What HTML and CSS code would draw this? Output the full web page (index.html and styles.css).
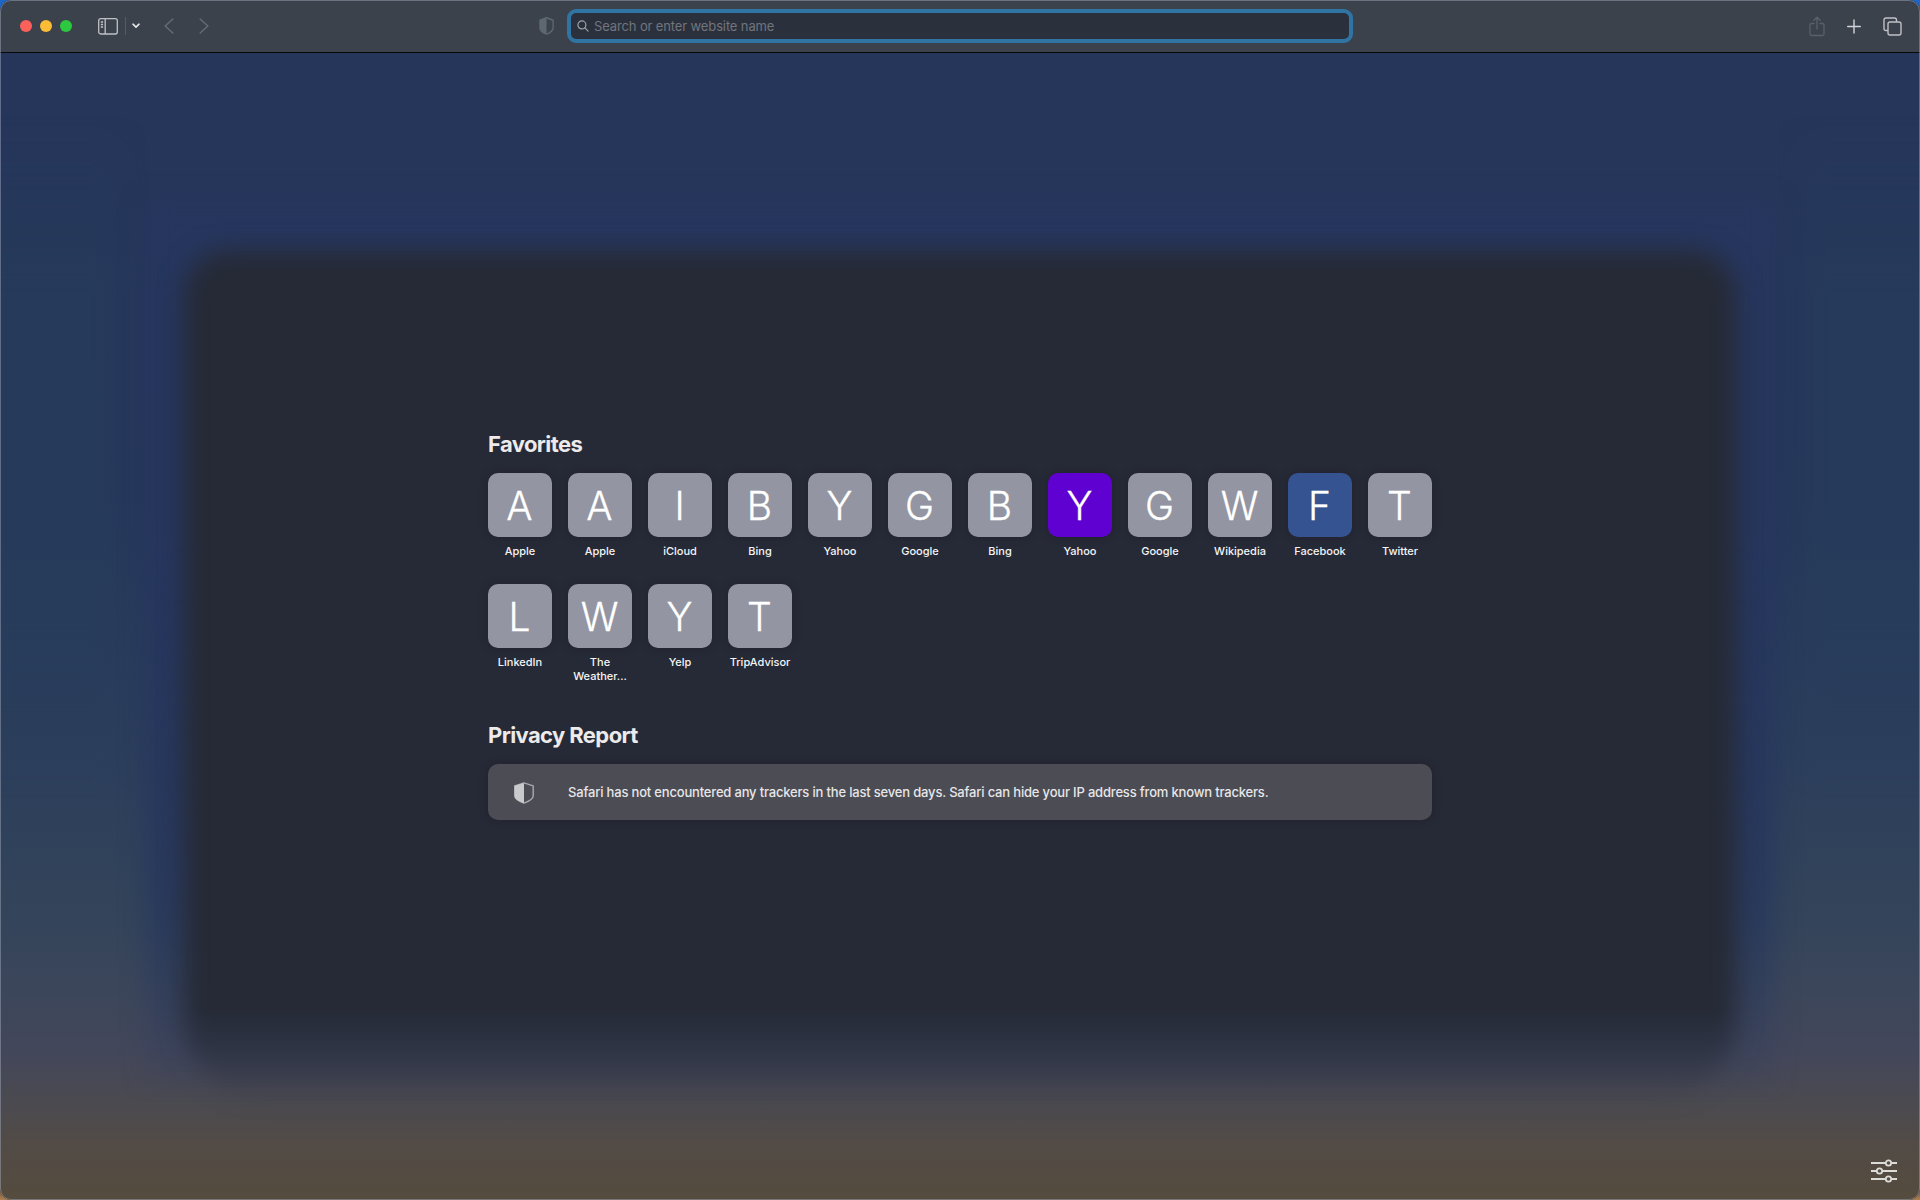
FILE: index.html
```html
<!DOCTYPE html>
<html lang="en">
<head>
<meta charset="utf-8">
<title>Start Page</title>
<link rel="stylesheet" href="styles.css">
</head>
<body>
<div class="window">
  <header class="toolbar">
    <div class="lights"><i class="light red"></i><i class="light yellow"></i><i class="light green"></i></div>
    <svg class="sidebar-icon" width="20" height="17" viewBox="0 0 20 17" fill="none" stroke="#bfc1c5" stroke-width="1.3"><rect x=".7" y=".7" width="18.6" height="15.3" rx="2"/><path d="M7.2 1v15M2.8 4h2.3M2.8 6.5h2.3M2.8 9h2.3"/></svg>
    <i class="divider"></i>
    <svg class="chevron" width="8" height="6" viewBox="0 0 8 6" fill="none" stroke="#e6e7e9" stroke-width="1.6" stroke-linecap="round" stroke-linejoin="round"><path d="M1 1.2l3 2.9 3-2.9"/></svg>
    <svg class="back" width="10" height="16" viewBox="0 0 10 16" fill="none" stroke="#656a75" stroke-width="1.5" stroke-linecap="round" stroke-linejoin="round"><path d="M8.8 1L1.2 8l7.6 7"/></svg>
    <svg class="forward" width="10" height="16" viewBox="0 0 10 16" fill="none" stroke="#656a75" stroke-width="1.5" stroke-linecap="round" stroke-linejoin="round"><path d="M1.2 1L8.8 8l-7.6 7"/></svg>
    <svg class="bar-shield" width="15" height="18" viewBox="0 0 20 22" preserveAspectRatio="none"><path d="M10 1L1.2 4v9c0 4 4.500 6.300 8.800 8 4.300-1.700 8.800-4 8.800-8V4z" fill="none" stroke="#5d6870" stroke-width="1.8" stroke-linejoin="round"/><path d="M10 1L1.2 4v9c0 4 4.500 6.300 8.800 8z" fill="#5d6870"/></svg>
    <div class="address">
      <svg width="12" height="12" viewBox="0 0 12 12" fill="none" stroke="#a1a3a8" stroke-width="1.2" stroke-linecap="round"><circle cx="4.900" cy="4.900" r="4"/><path d="M7.900 7.900l3.200 3.200"/></svg>
      <span>Search or enter website name</span>
    </div>
    <div class="actions">
      <svg width="16" height="21" viewBox="0 0 16 21" fill="none" stroke="#5c6066" stroke-width="1.3" stroke-linecap="round" stroke-linejoin="round"><path d="M5 7.500H2.500Q1 7.500 1 9v9q0 1.500 1.500 1.500h11Q15 19.500 15 18V9q0-1.500-1.500-1.500H11M8 13V1.300M4.800 4.300L8 1.200l3.200 3.100"/></svg>
      <svg width="14" height="15" viewBox="0 0 14 15" fill="none" stroke="#d2d4d7" stroke-width="1.4" stroke-linecap="round"><path d="M7 1v13M.7 7.500h12.600"/></svg>
      <svg width="19" height="19" viewBox="0 0 19 19" fill="none" stroke="#bfc1c5" stroke-width="1.4"><path d="M5 13.500H3Q1 13.500 1 11.500V3Q1 1 3 1h8.500q2 0 2 2v2"/><rect x="5" y="5" width="13" height="13" rx="2"/></svg>
    </div>
  </header>
  <main class="page">
    <div class="backdrop"></div>
    <div class="backdrop-glow"><div class="glow"></div></div>
    <div class="backdrop-shade"><div class="shade"></div></div>
    <div class="content">
      <h2 class="title favorites-title">Favorites</h2>
      <div class="grid">
        <div class="site"><b class="tile">A</b><span class="name">Apple</span></div>
        <div class="site"><b class="tile">A</b><span class="name">Apple</span></div>
        <div class="site"><b class="tile">I</b><span class="name">iCloud</span></div>
        <div class="site"><b class="tile">B</b><span class="name">Bing</span></div>
        <div class="site"><b class="tile">Y</b><span class="name">Yahoo</span></div>
        <div class="site"><b class="tile">G</b><span class="name">Google</span></div>
        <div class="site"><b class="tile">B</b><span class="name">Bing</span></div>
        <div class="site"><b class="tile purple">Y</b><span class="name">Yahoo</span></div>
        <div class="site"><b class="tile">G</b><span class="name">Google</span></div>
        <div class="site"><b class="tile">W</b><span class="name">Wikipedia</span></div>
        <div class="site"><b class="tile blue">F</b><span class="name">Facebook</span></div>
        <div class="site"><b class="tile">T</b><span class="name">Twitter</span></div>
        <div class="site"><b class="tile">L</b><span class="name">LinkedIn</span></div>
        <div class="site"><b class="tile">W</b><span class="name">The<br>Weather...</span></div>
        <div class="site"><b class="tile">Y</b><span class="name">Yelp</span></div>
        <div class="site"><b class="tile">T</b><span class="name">TripAdvisor</span></div>
      </div>
      <h2 class="title privacy-title">Privacy Report</h2>
      <div class="report">
        <svg width="20" height="22" viewBox="0 0 20 22"><path d="M10 .9L.8 3.800v10c0 3.600 4.500 5.600 9.200 7.400 4.700-1.800 9.200-3.800 9.200-7.400v-10z" fill="none" stroke="#a9aaae" stroke-width="1.4" stroke-linejoin="round"/><path d="M10 .9L.5 3.800v10c0 3.600 4.800 5.600 9.500 7.400z" fill="#c9cacc"/></svg>
        <span>Safari has not encountered any trackers in the last seven days. Safari can hide your IP address from known trackers.</span>
      </div>
    </div>
    <svg class="settings" width="26" height="24" viewBox="0 0 26 24" fill="none" stroke="#dcdbd8" stroke-width="1.8"><path d="M0 4h14.500M20.500 4H26M0 12h5.500M11.500 12H26M0 20h14.500M20.500 20H26"/><circle cx="17.500" cy="4" r="2.700"/><circle cx="8.500" cy="12" r="2.700"/><circle cx="17.500" cy="20" r="2.700"/></svg>
  </main>
</div>
</body>
</html>
```

FILE: styles.css
```css
* { box-sizing: border-box; }
body { margin: 0; width: 1920px; height: 1200px; overflow: hidden; background: linear-gradient(#1d66c8, #171c2a 40%, #171c2a 98%, #b08050); font-family: Inter, "Liberation Sans", sans-serif; }
svg { display: block; flex: none; }
.window { position: relative; display: flex; flex-direction: column; width: 1920px; height: 1200px; border-radius: 11px; overflow: hidden; }
.window::after { content: ""; position: absolute; inset: 0; border: 1px solid rgba(160, 170, 185, .48); border-radius: 11px; }
.toolbar { display: flex; align-items: center; flex: none; height: 53px; padding: 0 18px 0 20px; background: #3c424c; border-bottom: 1px solid #06080c; }
.lights { display: flex; gap: 8px; }
.light { width: 12px; height: 12px; border-radius: 50%; }
.red { background: #fc605b; }
.yellow { background: #fdbc35; }
.green { background: #2cc840; }
.sidebar-icon { margin-left: 26px; }
.divider { width: 1px; height: 18px; margin-left: 7px; background: #555a63; }
.chevron { margin-left: 6px; }
.back { margin-left: 24px; }
.forward { margin-left: 25px; }
.bar-shield { margin-left: 330px; }
.address { display: flex; align-items: center; gap: 5px; width: 786px; height: 34px; margin-left: 13px; padding-left: 6px; border: 4px solid #2f74a3; border-radius: 9px; background: #2b303d; color: #71757c; font-size: 13px; letter-spacing: -.13px; }
.actions { display: flex; align-items: center; gap: 22px; margin-left: auto; }
.page { position: relative; flex: 1; background: linear-gradient(#26365b 0, #26375b 450px, #2d3f5b 730px, #34445a 870px, #3b465a 930px, #43475a 1000px, #4b4a50 1050px, #524b46 1090px, #554b3e 1147px); }
.backdrop, .backdrop-glow, .backdrop-shade { position: absolute; inset: 0; }
.backdrop { background: linear-gradient(90deg, #263f5b, #263f5b 90px, transparent 150px, transparent 1770px, #263f5b 1830px, #263f5b); opacity: .45; mask-image: linear-gradient(transparent 60px, #000 240px, #000 550px, transparent 750px); }
.backdrop-glow { mask-image: linear-gradient(#000 480px, rgba(0, 0, 0, .75) 840px, transparent 1050px); }
.glow { position: absolute; left: 145px; right: 145px; top: 150px; bottom: 90px; background: #26365e; filter: blur(12px); clip-path: none; }
.backdrop-shade { mask-image: linear-gradient(#000 955px, rgba(0, 0, 0, .6) 995px, rgba(0, 0, 0, .15) 1035px, transparent 1070px); }
.shade { position: absolute; left: 184px; right: 184px; top: 197px; bottom: 90px; border-radius: 45px 45px 90px 90px; background: #262a36; filter: blur(12px); }
.content { position: relative; width: 944px; margin: 0 auto; padding-top: 377px; }
.title { margin: 0; height: 28px; line-height: 28px; color: #eceaea; font-size: 22px; font-weight: 700; letter-spacing: -.6px; }
.grid { display: grid; grid-template-columns: repeat(12, 64px); gap: 26px 16px; margin-top: 15px; }
.site { display: flex; flex-direction: column; align-items: center; gap: 7px; min-height: 85px; }
.tile { display: flex; align-items: center; justify-content: center; width: 64px; height: 64px; padding: 1px 1px 0 0; border-radius: 10px; background: #9495a2; box-shadow: 0 0 7px rgba(32, 26, 42, .6); color: #fff; font-size: 39px; font-weight: 300; -webkit-text-stroke: .3px #fff; }
.purple { background: #5f01d1; }
.blue { background: #345390; }
.name { color: #f4f4f5; font-size: 11px; font-weight: 500; line-height: 14px; text-align: center; white-space: nowrap; }
.privacy-title { margin-top: 38px; }
.report { display: flex; align-items: center; gap: 34px; height: 56px; margin-top: 15px; padding-left: 26px; border-radius: 10px; background: #4c4c54; box-shadow: 0 0 7px rgba(32, 26, 42, .6); color: #e6e6e8; font-size: 13px; font-weight: 500; letter-spacing: -.18px; white-space: nowrap; }
.report svg { margin-top: 2px; }
.settings { position: absolute; right: 23px; bottom: 17px; }
```
